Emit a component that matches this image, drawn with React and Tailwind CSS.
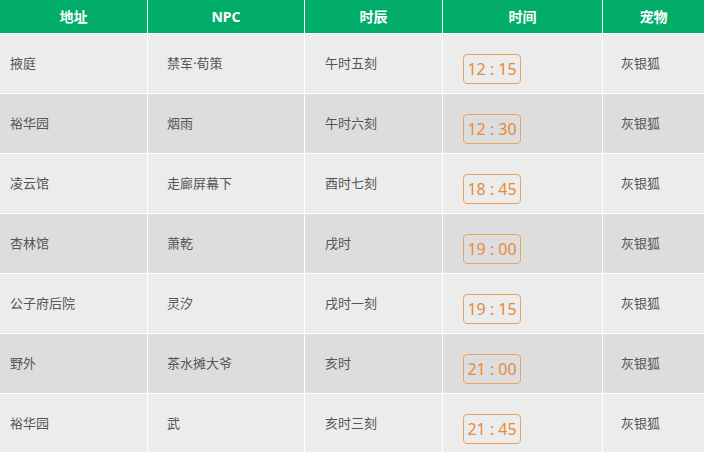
import React from 'react';

// 宠物刷新时间表
const rows = [
  { place: '掖庭', npc: '禁军·荀策', shichen: '午时五刻', time: '12 : 15', pet: '灰银狐' },
  { place: '裕华园', npc: '烟雨', shichen: '午时六刻', time: '12 : 30', pet: '灰银狐' },
  { place: '凌云馆', npc: '走廊屏幕下', shichen: '酉时七刻', time: '18 : 45', pet: '灰银狐' },
  { place: '杏林馆', npc: '萧乾', shichen: '戌时', time: '19 : 00', pet: '灰银狐' },
  { place: '公子府后院', npc: '灵汐', shichen: '戌时一刻', time: '19 : 15', pet: '灰银狐' },
  { place: '野外', npc: '茶水摊大爷', shichen: '亥时', time: '21 : 00', pet: '灰银狐' },
  { place: '裕华园', npc: '武', shichen: '亥时三刻', time: '21 : 45', pet: '灰银狐' },
];

const headers = ['地址', 'NPC', '时辰', '时间', '宠物'];

export default function App() {
  return (
    <div
      className="w-[704px] h-[452px] overflow-hidden bg-white"
      style={{ fontFamily: '"Noto Sans", "Noto Sans CJK SC", sans-serif' }}
    >
      <div className="grid grid-cols-[147px_156px_137px_159px_1fr] gap-px bg-white">
        {headers.map((h) => (
          <div
            key={h}
            className="h-[33px] bg-[#02ad69] flex items-center justify-center text-white text-[14px] font-bold"
          >
            {h}
          </div>
        ))}
        {rows.map((r, i) => {
          const bg = i % 2 === 0 ? 'bg-[#ececec]' : 'bg-[#dddddd]';
          return (
            <React.Fragment key={i}>
              <div className={`h-[59px] ${bg} flex items-center pl-[10px] text-[13px] text-[#555]`}>{r.place}</div>
              <div className={`h-[59px] ${bg} flex items-center pl-[19px] text-[13px] text-[#555]`}>{r.npc}</div>
              <div className={`h-[59px] ${bg} flex items-center pl-[20px] text-[13px] text-[#555]`}>{r.shichen}</div>
              <div className={`h-[59px] ${bg} flex items-center pl-[20px]`}>
                <span
                  className="mt-[10px] w-[58px] h-[30px] border border-[#e9a35e] rounded-[4px] flex items-center justify-center text-[16px] text-[#e58a3c]"
                >
                  {r.time}
                </span>
              </div>
              <div className={`h-[59px] ${bg} flex items-center pl-[18px] text-[13px] text-[#555]`}>{r.pet}</div>
            </React.Fragment>
          );
        })}
      </div>
    </div>
  );
}
